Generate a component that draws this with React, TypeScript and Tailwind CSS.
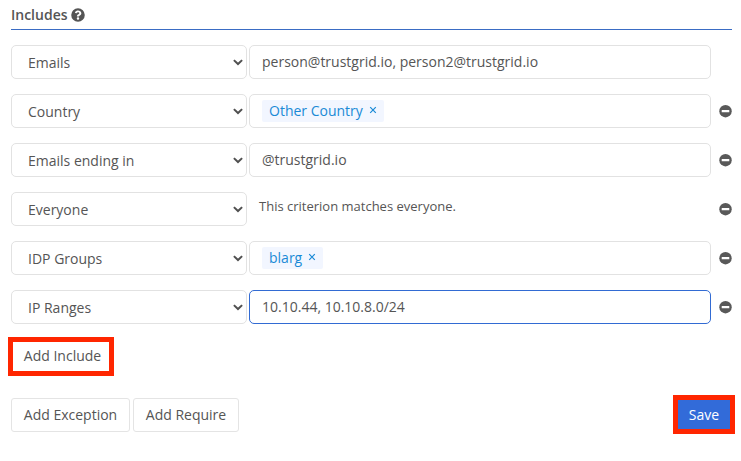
import React from 'react';

function Minus() {
  return (
    <svg className="ml-2 h-[13px] w-[13px] shrink-0" viewBox="0 0 13 13">
      <circle cx="6.5" cy="6.200" r="6.200" fill="#595959" />
      <rect x="2.700" y="5" width="7.600" height="2.200" rx="0.3" fill="#fff" />
    </svg>
  );
}

function Select({ label }: { label: string }) {
  return (
    <div className="flex h-[34px] w-[236px] shrink-0 items-center justify-between rounded-[5px] border border-[#e2e2e2] pl-4 pr-[3px]">
      <span className="pt-[2px]">{label}</span>
      <svg className="h-[7px] w-[10px]" viewBox="0 0 10 7" fill="none" stroke="#505050" strokeWidth="2">
        <path d="M0.9 1.100 5 5 9.100 1.100" />
      </svg>
    </div>
  );
}

function Tag({ label }: { label: string }) {
  return (
    <span className="flex h-[22px] items-center rounded-[2px] bg-[#f2f6ff] px-[7px] text-[#1a8ad6]">
      {label}
      <svg className="mb-[2px] ml-[6px] h-[8px] w-[8px]" viewBox="0 0 8 8" stroke="#1a8ad6" strokeWidth="1.200">
        <path d="M1.200 1.200 6.800 6.800M6.800 1.200 1.200 6.800" />
      </svg>
    </span>
  );
}

const rows = [
  { label: 'Emails', value: 'person@trustgrid.io, person2@trustgrid.io', fixed: true },
  { label: 'Country', tag: 'Other Country' },
  { label: 'Emails ending in', value: '@trustgrid.io' },
  { label: 'Everyone', note: 'This criterion matches everyone.' },
  { label: 'IDP Groups', tag: 'blarg' },
  { label: 'IP Ranges', value: '10.10.44, 10.10.8.0/24', focus: true },
];

export default function App() {
  return (
    <div className="h-[461px] w-[741px] bg-white pl-[11px] pr-[9px] font-['Open_Sans',sans-serif] text-[14px] leading-5 text-[#555]">
      <header className="flex h-[30px] items-center gap-[3px] border-b border-[#3a6cc4]">
        <h2 className="font-semibold">Includes</h2>
        <svg className="h-[14px] w-[14px]" viewBox="0 0 512 512" fill="#555">
          <path d="M504 256a248 248 0 1 1-496 0 248 248 0 0 1 496 0zM262.7 90c-54.500 0-89.300 23-116.500 63.800-3.500 5.300-2.400 12.400 2.700 16.300l34.700 26.300c5.200 3.900 12.600 3 16.700-2.100 17.800-22.600 30.100-35.800 57.300-35.800 20.400 0 45.700 13.200 45.700 33 0 15-12.400 22.700-32.500 34C247.100 238.500 216 254.900 216 296v4c0 6.600 5.400 12 12 12h56c6.600 0 12-5.400 12-12v-1.300c0-28.500 83.200-29.600 83.200-106.700 0-58-60.200-102-116.500-102zM256 338a46 46 0 1 0 0 92 46 46 0 0 0 0-92z" />
        </svg>
      </header>
      <main className="flex flex-col gap-[15px] pt-[15px]">
        {rows.map((r) => (
          <div key={r.label} className="flex h-[34px] items-center">
            <Select label={r.label} />
            {r.note ? (
              <p className="ml-[2px] w-[462px] pb-[6px] pl-[10px] text-[13px]">{r.note}</p>
            ) : (
              <div
                className={`ml-[2px] flex h-[34px] w-[462px] items-center rounded-[5px] border pl-3 ${r.focus ? 'border-[#326bd3]' : 'border-[#e2e2e2]'}`}
              >
                {r.tag ? <Tag label={r.tag} /> : r.value}
              </div>
            )}
            {!r.fixed && <Minus />}
          </div>
        ))}
      </main>
      <button className="-ml-[3px] mt-[13px] block h-[39px] w-[106px] border-[5px] border-[#ff2600] pb-[2px] pl-[3px] text-center">
        Add Include
      </button>
      <footer className="-mr-[3px] mt-[19px] flex items-center">
        <button className="h-[34px] w-[119px] rounded-[3px] border border-[#e4e4e4]">Add Exception</button>
        <button className="ml-[3px] h-[34px] w-[106px] rounded-[3px] border border-[#e4e4e4]">Add Require</button>
        <button className="ml-auto h-[39px] w-[62px] border-[5px] border-[#ff2600] bg-[#326bd9] text-white">Save</button>
      </footer>
    </div>
  );
}
